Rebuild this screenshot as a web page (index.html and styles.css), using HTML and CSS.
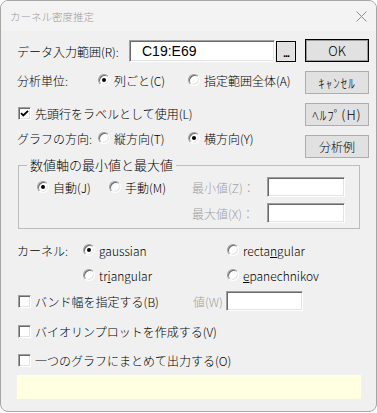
FILE: index.html
```html
<!DOCTYPE html>
<html lang="ja">
<head>
<meta charset="utf-8">
<title>カーネル密度推定</title>
<link rel="stylesheet" href="styles.css">
</head>
<body>
<div class="window">
  <div class="titlebar">
    <span class="title">カーネル密度推定</span>
    <svg class="close" width="11" height="11" viewBox="0 0 11 11"><path d="M0.5 0.5L10.5 10.5M10.5 0.5L0.5 10.5" stroke="#8f8f8f" stroke-width="1" fill="none"/></svg>
  </div>
  <div class="body">
    <div class="top">
      <div class="left">
        <div class="row r1">
          <span class="range-label">データ入力範囲(R):</span>
          <div class="textbox range">C19:E69</div>
          <button class="btn dots">...</button>
        </div>
        <div class="row r2 opts">
          <span>分析単位:</span>
          <span class="radio on"><span class="rb"></span>列ごと(C)</span>
          <span class="radio"><span class="rb"></span>指定範囲全体(A)</span>
        </div>
        <div class="row r3">
          <span class="check on"><span class="cb"><svg width="11" height="11" viewBox="0 0 11 11"><path d="M2 5.2L4.3 7.5L9 2.8" stroke="#000" stroke-width="1.8" fill="none"/></svg></span>先頭行をラベルとして使用(L)</span>
        </div>
        <div class="row r4 opts">
          <span>グラフの方向:</span>
          <span class="radio"><span class="rb"></span>縦方向(T)</span>
          <span class="radio on"><span class="rb"></span>横方向(Y)</span>
        </div>
      </div>
      <div class="buttons">
        <button class="btn default">OK</button>
        <button class="btn kana">ｷｬﾝｾﾙ</button>
        <button class="btn kana">ﾍﾙﾌﾟ(H)</button>
        <button class="btn">分析例</button>
      </div>
    </div>

    <fieldset class="group">
      <legend>数値軸の最小値と最大値</legend>
      <div class="group-grid">
        <span class="radio on"><span class="rb"></span>自動(J)</span>
        <span class="radio"><span class="rb"></span>手動(M)</span>
        <span class="disabled">最小値(Z)：</span>
        <div class="textbox small"></div>
        <span></span>
        <span></span>
        <span class="disabled">最大値(X)：</span>
        <div class="textbox small"></div>
      </div>
    </fieldset>

    <div class="kernel">
      <span>カーネル:</span>
      <span class="radio on"><span class="rb"></span><span><u>g</u>aussian</span></span>
      <span class="radio"><span class="rb"></span><span>recta<u>n</u>gular</span></span>
      <span></span>
      <span class="radio"><span class="rb"></span><span>tr<u>i</u>angular</span></span>
      <span class="radio"><span class="rb"></span><span><u>e</u>panechnikov</span></span>
    </div>

    <div class="checkrow bw">
      <span class="check bw-check"><span class="cb"></span>バンド幅を指定する(B)</span>
      <span class="disabled val">値(W)</span>
      <div class="textbox bwbox"></div>
    </div>
    <div class="checkrow violin">
      <span class="check"><span class="cb"></span>バイオリンプロットを作成する(V)</span>
    </div>
    <div class="checkrow single">
      <span class="check"><span class="cb"></span>一つのグラフにまとめて出力する(O)</span>
    </div>

    <div class="status"></div>
  </div>
</div>
</body>
</html>
```

FILE: styles.css
```css
html, body {
  margin: 0;
  padding: 0;
}

body {
  background: #ffffff;
  font-family: "Noto Sans CJK JP", "Liberation Sans", sans-serif;
  font-size: 12px;
  font-weight: 300;
  color: #000;
}

.window {
  width: 375px;
  height: 410px;
  border: 1px solid #a6a6a6;
  border-radius: 8px;
  background: #f0f0f0;
  overflow: hidden;
  display: flex;
  flex-direction: column;
}

.titlebar {
  height: 30px;
  flex: none;
  background: #f3f3f3;
  display: flex;
  align-items: center;
  justify-content: space-between;
  padding: 0 9px 0 9px;
}

.title {
  font-size: 10.5px;
  color: #9a9a9a;
}

.close {
  display: block;
}

.body {
  padding: 8px 0 0 16px;
}

.top {
  display: flex;
}

.left {
  width: 288px;
}

.row {
  height: 20px;
  display: flex;
  align-items: center;
}

.r1 {
  height: 24px;
}

.r2 {
  margin-top: 7px;
}

.r3 {
  margin-top: 13px;
  padding-left: 1px;
}

.r4 {
  margin-top: 5px;
}

.opts {
  display: grid;
  grid-template-columns: 81px 90px auto;
  align-items: center;
}

.range-label {
  width: 112px;
}

.textbox {
  box-sizing: border-box;
  background: #fff;
  border: 1px solid;
  border-color: #a0a0a0 #ffffff #ffffff #a0a0a0;
  box-shadow: inset 1px 1px 0 #696969, inset -1px -1px 0 #e3e3e3;
}

.range {
  width: 146px;
  height: 22px;
  padding-left: 12px;
  font-family: "Liberation Sans", sans-serif;
  font-weight: normal;
  font-size: 14px;
  line-height: 20px;
}

.small {
  width: 78px;
  height: 20px;
}

.buttons {
  width: 64px;
  display: flex;
  flex-direction: column;
  gap: 9px;
}

.btn {
  box-sizing: border-box;
  width: 64px;
  height: 23px;
  padding: 0;
  margin: 0;
  background: #e1e1e1;
  border: 1px solid #adadad;
  font-family: "Noto Sans CJK JP", "Liberation Sans", sans-serif;
  font-size: 12px;
  font-weight: 300;
  color: #000;
}

.btn.kana {
  font-size: 13px;
  letter-spacing: 1px;
}

.btn.default {
  border-color: #000;
  box-shadow: inset 0 0 0 1px #9a9a9a;
  font-size: 13px;
}

.btn.dots {
  width: 20px;
  height: 21px;
  margin-left: 1px;
  border-color: #000;
  box-shadow: inset 0 0 0 1px #e8e8e8;
  font-family: "Liberation Sans", sans-serif;
  font-size: 11px;
  font-weight: bold;
  line-height: 1;
  padding-top: 5px;
  letter-spacing: -1px;
}

.radio, .check {
  display: inline-flex;
  align-items: center;
  white-space: nowrap;
}

.rb {
  position: relative;
  box-sizing: border-box;
  width: 12px;
  height: 12px;
  flex: none;
  margin-right: 4px;
  border-radius: 50%;
  background: #fff;
  border: 1px solid;
  border-color: #a0a0a0 #ffffff #ffffff #a0a0a0;
  box-shadow: inset 1px 1px 0 #696969, inset -1px -1px 0 #e3e3e3;
}

.radio.on .rb::after {
  content: "";
  position: absolute;
  left: 3px;
  top: 3px;
  width: 4px;
  height: 4px;
  border-radius: 50%;
  background: #000;
}

.cb {
  box-sizing: border-box;
  width: 13px;
  height: 13px;
  flex: none;
  margin-right: 4px;
  background: #fff;
  border: 1px solid;
  border-color: #a0a0a0 #ffffff #ffffff #a0a0a0;
  box-shadow: inset 1px 1px 0 #696969, inset -1px -1px 0 #e3e3e3;
  display: flex;
  align-items: center;
  justify-content: center;
}

.cb svg {
  display: block;
}

.disabled {
  color: #a0a0a0;
}

.group {
  box-sizing: border-box;
  width: 342px;
  margin: -1px 0 0 1px;
  padding: 0 0 5px 8px;
  border: 1px solid #bcbcbc;
  min-width: 0;
}

.group legend {
  padding: 0 3px;
  font-size: 13px;
  line-height: 16px;
}

.group-grid {
  margin: 4px 0 0 10px;
  display: grid;
  grid-template-columns: 72px 83px 75px 78px;
  grid-template-rows: 20px 20px;
  row-gap: 6px;
  align-items: center;
}

.kernel {
  margin-top: 11px;
  display: grid;
  grid-template-columns: 66px 144px auto;
  grid-template-rows: 20px 20px;
  row-gap: 5px;
  align-items: center;
}

.kernel u {
  text-decoration-thickness: 1px;
  text-underline-offset: 1px;
}

.checkrow {
  height: 20px;
  display: flex;
  align-items: center;
  padding-left: 1px;
}

.bw {
  margin-top: 6px;
}

.bw-check {
  width: 175px;
}

.val {
  width: 33px;
}

.bwbox {
  width: 77px;
  height: 20px;
}

.violin {
  margin-top: 10px;
}

.single {
  margin-top: 9px;
}

.status {
  margin-top: 5px;
  width: 344px;
  height: 24px;
  background: #ffffe1;
}
```
